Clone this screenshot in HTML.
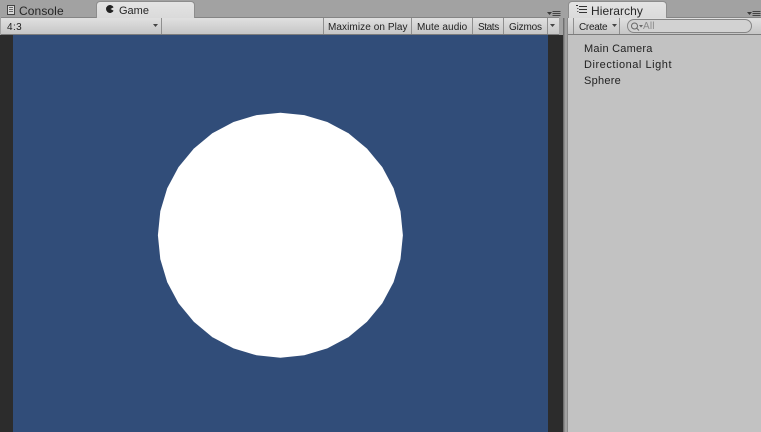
<!DOCTYPE html>
<html>
<head>
<meta charset="utf-8">
<style>
html,body{margin:0;padding:0;width:761px;height:432px;overflow:hidden;background:#a2a2a2}
#r{position:relative;width:761px;height:432px;overflow:hidden;font-family:"Liberation Sans",sans-serif;color:#222}
#r div{position:absolute;box-sizing:border-box}
.t{white-space:nowrap;line-height:14px}
.sep{width:1px;background:#8f8f8f}
</style>
</head>
<body>
<div id="r">
  <!-- tab strip -->
  <div style="left:0;top:0;width:761px;height:18px;background:#a2a2a2"></div>

  <!-- game toolbar -->
  <div style="left:1px;top:17px;width:558px;height:18px;background:linear-gradient(#e0e0e0,#c6c6c6);border-top:1px solid #858585;border-bottom:1px solid #7c7c7c"></div>
  <div class="sep" style="left:161px;top:18px;height:16px"></div>
  <div class="sep" style="left:323px;top:18px;height:16px"></div>
  <div class="sep" style="left:411px;top:18px;height:16px"></div>
  <div class="sep" style="left:472px;top:18px;height:16px"></div>
  <div class="sep" style="left:503px;top:18px;height:16px"></div>
  <div class="sep" style="left:547px;top:18px;height:16px"></div>
  <div class="t" style="left:7px;top:21px;font-size:10px;letter-spacing:.4px">4:3</div>
  <div class="t" style="left:328px;top:21px;font-size:10px;letter-spacing:.08px">Maximize on Play</div>
  <div class="t" style="left:417px;top:21px;font-size:10px;letter-spacing:.08px">Mute audio</div>
  <div class="t" style="left:478px;top:21px;font-size:10px;letter-spacing:-.4px">Stats</div>
  <div class="t" style="left:509px;top:21px;font-size:10px;letter-spacing:-.17px">Gizmos</div>
  <svg style="position:absolute;left:0;top:0" width="761" height="36">
    <path d="M153 24h5l-2.500 3z" fill="#444"/>
    <path d="M550 24h5l-2.500 3z" fill="#444"/>
  </svg>

  <!-- tabs -->
  <div style="left:96px;top:1px;width:99px;height:17px;background:linear-gradient(#e4e4e4,#dadada);border:1px solid #8d8d8d;border-bottom:none;border-radius:4px 4px 0 0"></div>
  <div class="t" style="left:19px;top:4px;font-size:12px;letter-spacing:.1px;color:#262626">Console</div>
  <div class="t" style="left:119px;top:4px;font-size:11px;color:#262626">Game</div>
  <svg style="position:absolute;left:0;top:0" width="130" height="18">
    <rect x="7.500" y="5.500" width="7" height="9" fill="#d8d8d8" stroke="#444"/>
    <path d="M9 7.500h4M9 9.500h4M9 11.500h4" stroke="#666" stroke-width="1"/>
    <path d="M113.600 7.200A4 4 0 1 0 113.600 10.800L110.500 9z" fill="#222"/>
  </svg>

  <!-- dark gutters + game view -->
  <div style="left:0;top:35px;width:13px;height:397px;background:#2c2c2c"></div>
  <div style="left:548px;top:35px;width:15px;height:397px;background:#2c2c2c"></div>
  <div style="left:13px;top:35px;width:535px;height:397px;background:#314d79"></div>
  <svg style="position:absolute;left:0;top:0" width="761" height="432">
    <polygon transform="translate(280.400 235.200)" fill="#fff" points="122.500,0 120.100,23.900 113.200,46.900 101.900,68.100 86.600,86.600 68.100,101.900 46.900,113.200 23.900,120.100 0,122.500 -23.900,120.100 -46.900,113.200 -68.100,101.900 -86.600,86.600 -101.900,68.100 -113.200,46.900 -120.100,23.900 -122.500,0 -120.100,-23.900 -113.200,-46.900 -101.900,-68.100 -86.600,-86.600 -68.100,-101.900 -46.900,-113.200 -23.900,-120.100 0,-122.500 23.900,-120.100 46.900,-113.200 68.100,-101.900 86.600,-86.600 101.900,-68.100 113.200,-46.900 120.100,-23.900"/>
  </svg>

  <!-- splitter -->
  <div style="left:563px;top:0;width:5px;height:432px;background:#a2a2a2"></div>
  <div style="left:563px;top:18px;width:1px;height:414px;background:#6f6f6f"></div>
  <div style="left:564px;top:18px;width:1px;height:414px;background:#8c8c8c"></div>
  <div style="left:567px;top:18px;width:1px;height:414px;background:#8a8a8a"></div>

  <!-- pane menu icons -->
  <svg style="position:absolute;left:0;top:0" width="761" height="20">
    <path d="M547 12h5l-2.500 3z" fill="#3a3a3a"/>
    <path d="M552.500 11.500h8M552.500 13.500h8M552.500 15.500h8" stroke="#444" stroke-width="1"/>
    <path d="M747 12h5l-2.500 3z" fill="#3a3a3a"/>
    <path d="M752.500 11.500h8M752.500 13.500h8M752.500 15.500h8" stroke="#444" stroke-width="1"/>
  </svg>

  <!-- hierarchy panel -->
  <div style="left:568px;top:35px;width:193px;height:397px;background:#c2c2c2"></div>
  <div style="left:568px;top:17px;width:193px;height:18px;background:linear-gradient(#e0e0e0,#c6c6c6);border-top:1px solid #858585;border-bottom:1px solid #7c7c7c"></div>
  <div style="left:568px;top:1px;width:99px;height:17px;background:linear-gradient(#e4e4e4,#dadada);border:1px solid #8d8d8d;border-bottom:none;border-radius:4px 4px 0 0"></div>
  <div class="t" style="left:591px;top:4px;font-size:12px;letter-spacing:.07px;color:#262626">Hierarchy</div>
  <svg style="position:absolute;left:0;top:0" width="761" height="36">
    <path d="M576 5.500h2M579 6.500h8M579 9.500h8M579 12.500h8" stroke="#333" stroke-width="1"/>
    <path d="M577 8.500h1.500M577 11.500h1.500" stroke="#666" stroke-width="1"/>
    <path d="M612 24h5l-2.500 3z" fill="#444"/>
    <rect x="627.500" y="19.500" width="124" height="13" rx="6.500" fill="#d2d2d2" stroke="#858585"/>
    <circle cx="634.500" cy="26" r="3" fill="none" stroke="#666"/>
    <path d="M636.700 28.200l2.300 2.300" stroke="#666"/>
    <path d="M639 25h4l-2 2.500z" fill="#666"/>
  </svg>
  <div class="sep" style="left:573px;top:18px;height:16px"></div>
  <div class="sep" style="left:619px;top:18px;height:16px"></div>
  <div class="t" style="left:579px;top:21px;font-size:10px;letter-spacing:-.3px">Create</div>
  <div class="t" style="left:643px;top:20px;font-size:10px;letter-spacing:.2px;color:#8a8a8a">All</div>
  <div class="t" style="left:584px;top:42px;font-size:11px;letter-spacing:.24px">Main Camera</div>
  <div class="t" style="left:584px;top:58px;font-size:11px;letter-spacing:.54px">Directional Light</div>
  <div class="t" style="left:584px;top:74px;font-size:11px;letter-spacing:.25px">Sphere</div>
</div>
</body>
</html>
